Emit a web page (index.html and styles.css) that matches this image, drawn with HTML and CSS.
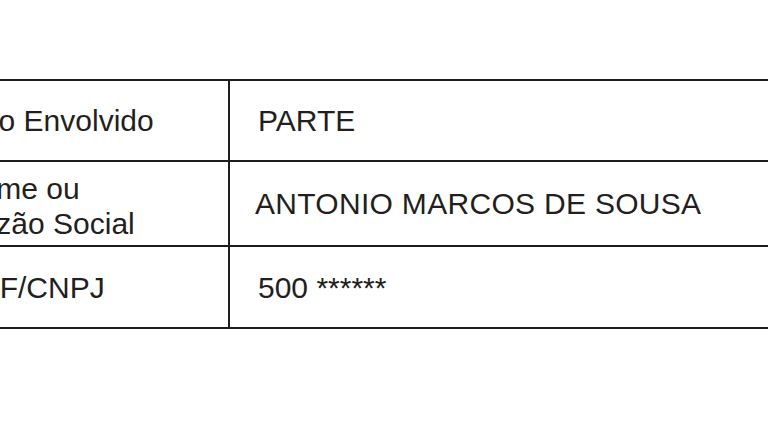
FILE: index.html
```html
<!DOCTYPE html>
<html lang="pt">
<head>
<meta charset="utf-8">
<title>Envolvidos</title>
<link rel="stylesheet" href="styles.css">
</head>
<body>
<div class="sheet">
  <div class="grid">
    <div class="row row-1">
      <div class="cell label">Tipo Envolvido</div>
      <div class="cell value">PARTE</div>
    </div>
    <div class="row row-2">
      <div class="cell label two">Nome ou<br>Razão Social</div>
      <div class="cell value wide">ANTONIO MARCOS DE SOUSA</div>
    </div>
    <div class="row row-3">
      <div class="cell label">CPF/CNPJ</div>
      <div class="cell value">500 ******</div>
    </div>
  </div>
</div>
</body>
</html>
```
FILE: styles.css
```css
html, body {
  margin: 0;
  padding: 0;
  background: #ffffff;
  overflow: hidden;
}
.sheet {
  width: 768px;
  height: 440px;
  overflow: hidden;
  padding-top: 79px;
  box-sizing: border-box;
}
.grid {
  width: 1000px;
  margin-left: -69px;
  border-top: 2px solid #1e1c1d;
  font-family: "Liberation Sans", Arial, sans-serif;
  font-size: 30px;
  color: #231f20;
}
.row {
  display: flex;
  border-bottom: 2px solid #1e1c1d;
  box-sizing: border-box;
}
.row-1 { height: 81px; }
.row-2 { height: 85px; }
.row-3 { height: 82px; }
.cell {
  display: flex;
  align-items: center;
  box-sizing: border-box;
  line-height: 35px;
  white-space: nowrap;
}
.label {
  width: 299px;
  flex: none;
  padding-left: 27px;
  border-right: 2px solid #1e1c1d;
}
.label.two {
  padding-top: 4px;
}
.value {
  flex: 1;
  padding-left: 28px;
}
.value.wide {
  letter-spacing: 0.3px;
  padding-left: 25px;
}
```
